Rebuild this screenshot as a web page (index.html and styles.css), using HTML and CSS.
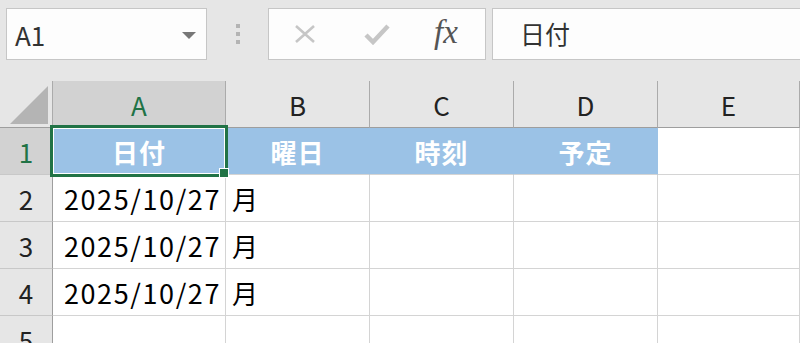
FILE: index.html
```html
<!DOCTYPE html>
<html lang="ja">
<head>
  <meta charset="UTF-8" />
  <title>Book1 - Excel</title>
  <link rel="stylesheet" href="styles.css">
</head>
<body>
  <div class="toolbar">
    <div class="namebox">
      <span class="cellref">A1</span>
      <span class="dropdown"></span>
    </div>
    <div class="grip"><i></i><i></i><i></i></div>
    <div class="buttons">
      <svg class="btn-icon" width="24" height="18" viewBox="0 0 24 18">
        <path d="M3 1 L21 17 M21 1 L3 17" stroke="#c6c6c6" stroke-width="2.6" fill="none"/>
      </svg>
      <svg class="btn-icon" width="26" height="22" viewBox="0 0 26 22">
        <path d="M2 12 L9 19 L24 3" stroke="#c6c6c6" stroke-width="4.5" fill="none"/>
      </svg>
      <span class="fx">fx</span>
    </div>
    <div class="formula">日付</div>
  </div>

  <div class="sheet">
    <div class="corner"><span class="triangle"></span></div>
    <div class="colhead active">A</div>
    <div class="colhead">B</div>
    <div class="colhead">C</div>
    <div class="colhead">D</div>
    <div class="colhead">E</div>

    <div class="rowhead active">1</div>
    <div class="cell title">日付</div>
    <div class="cell title">曜日</div>
    <div class="cell title">時刻</div>
    <div class="cell title">予定</div>
    <div class="cell"></div>

    <div class="rowhead">2</div>
    <div class="cell num">2025/10/27</div>
    <div class="cell">月</div>
    <div class="cell"></div>
    <div class="cell"></div>
    <div class="cell"></div>

    <div class="rowhead">3</div>
    <div class="cell num">2025/10/27</div>
    <div class="cell">月</div>
    <div class="cell"></div>
    <div class="cell"></div>
    <div class="cell"></div>

    <div class="rowhead">4</div>
    <div class="cell num">2025/10/27</div>
    <div class="cell">月</div>
    <div class="cell"></div>
    <div class="cell"></div>
    <div class="cell"></div>

    <div class="rowhead">5</div>
    <div class="cell"></div>
    <div class="cell"></div>
    <div class="cell"></div>
    <div class="cell"></div>
    <div class="cell"></div>

    <div class="selection"><span class="handle"></span></div>
  </div>
</body>
</html>
```

FILE: styles.css
```css
body {
  margin: 0;
  font-family: "Noto Sans CJK JP", sans-serif;
  background: #e6e6e6;
  width: 800px;
  height: 343px;
  overflow: hidden;
}
.toolbar {
  height: 81px;
  box-sizing: border-box;
  padding-top: 8px;
  display: flex;
  align-items: flex-start;
}
.namebox {
  margin-left: 6px;
  width: 201px;
  height: 52px;
  box-sizing: border-box;
  border: 1px solid #c6c6c6;
  background: #fdfdfd;
  display: flex;
  align-items: center;
  justify-content: space-between;
  padding: 0 10px 0 8px;
}
.cellref {
  font-size: 26px;
  color: #333;
}
.dropdown {
  width: 0;
  height: 0;
  border-left: 7px solid transparent;
  border-right: 7px solid transparent;
  border-top: 7px solid #777;
  margin-top: 2px;
}
.grip {
  margin-left: 29px;
  margin-top: 16px;
  display: flex;
  flex-direction: column;
  gap: 4px;
}
.grip i {
  display: block;
  width: 4px;
  height: 4px;
  background: #b4b4b4;
}
.buttons {
  margin-left: 28px;
  width: 218px;
  height: 52px;
  box-sizing: border-box;
  border: 1px solid #c6c6c6;
  background: #fdfdfd;
  display: flex;
  align-items: center;
  padding-left: 24px;
  gap: 47px;
}
.fx {
  font-family: "Liberation Serif", serif;
  font-style: italic;
  font-size: 33px;
  color: #555;
  margin-left: -3px;
  margin-top: -4px;
}
.formula {
  margin-left: 6px;
  flex: 1;
  height: 52px;
  box-sizing: border-box;
  border: 1px solid #c6c6c6;
  border-right: none;
  background: #fdfdfd;
  font-size: 25px;
  color: #333;
  padding-left: 27px;
  line-height: 48px;
}
.sheet {
  position: relative;
  display: grid;
  grid-template-columns: 53px 173px 144px 144px 144px 1fr;
  grid-template-rows: 47px 47px 47px 47px 47px 47px;
}
.corner {
  border-right: 1px solid #ababab;
  border-bottom: 1px solid #9e9e9e;
  position: relative;
}
.triangle {
  position: absolute;
  right: 4px;
  bottom: 3px;
  width: 0;
  height: 0;
  border-left: 38px solid transparent;
  border-bottom: 38px solid #b4b4b4;
}
.colhead {
  border-right: 1px solid #ababab;
  border-bottom: 1px solid #9e9e9e;
  font-size: 26px;
  color: #222;
  display: flex;
  align-items: center;
  justify-content: center;
}
.rowhead {
  background: #e6e6e6;
  border-right: 1px solid #9e9e9e;
  border-bottom: 1px solid #c8c8c8;
  font-size: 26px;
  color: #222;
  display: flex;
  align-items: center;
  justify-content: center;
}
.colhead.active,
.rowhead.active {
  background: #d2d2d2;
  color: #217346;
}
.cell {
  background: #fff;
  border-right: 1px solid #d4d4d4;
  border-bottom: 1px solid #d4d4d4;
  font-size: 26px;
  color: #000;
  display: flex;
  align-items: center;
  padding-left: 6px;
  white-space: nowrap;
}
.cell.title {
  background: #9bc2e6;
  border-right-color: #9bc2e6;
  color: #fff;
  font-weight: bold;
  justify-content: center;
  padding-left: 0;
  letter-spacing: 1px;
}
.cell.num {
  justify-content: flex-end;
  padding-left: 0;
  padding-right: 4px;
  font-size: 27px;
  letter-spacing: 1.6px;
}
.selection {
  position: absolute;
  left: 50px;
  top: 44px;
  width: 178px;
  height: 52px;
  box-sizing: border-box;
  border: 3px solid #217346;
  box-shadow: inset 0 0 0 1px #fff;
}
.handle {
  position: absolute;
  right: -4px;
  bottom: -4px;
  width: 8px;
  height: 8px;
  background: #217346;
  border: 1px solid #fff;
}
```
